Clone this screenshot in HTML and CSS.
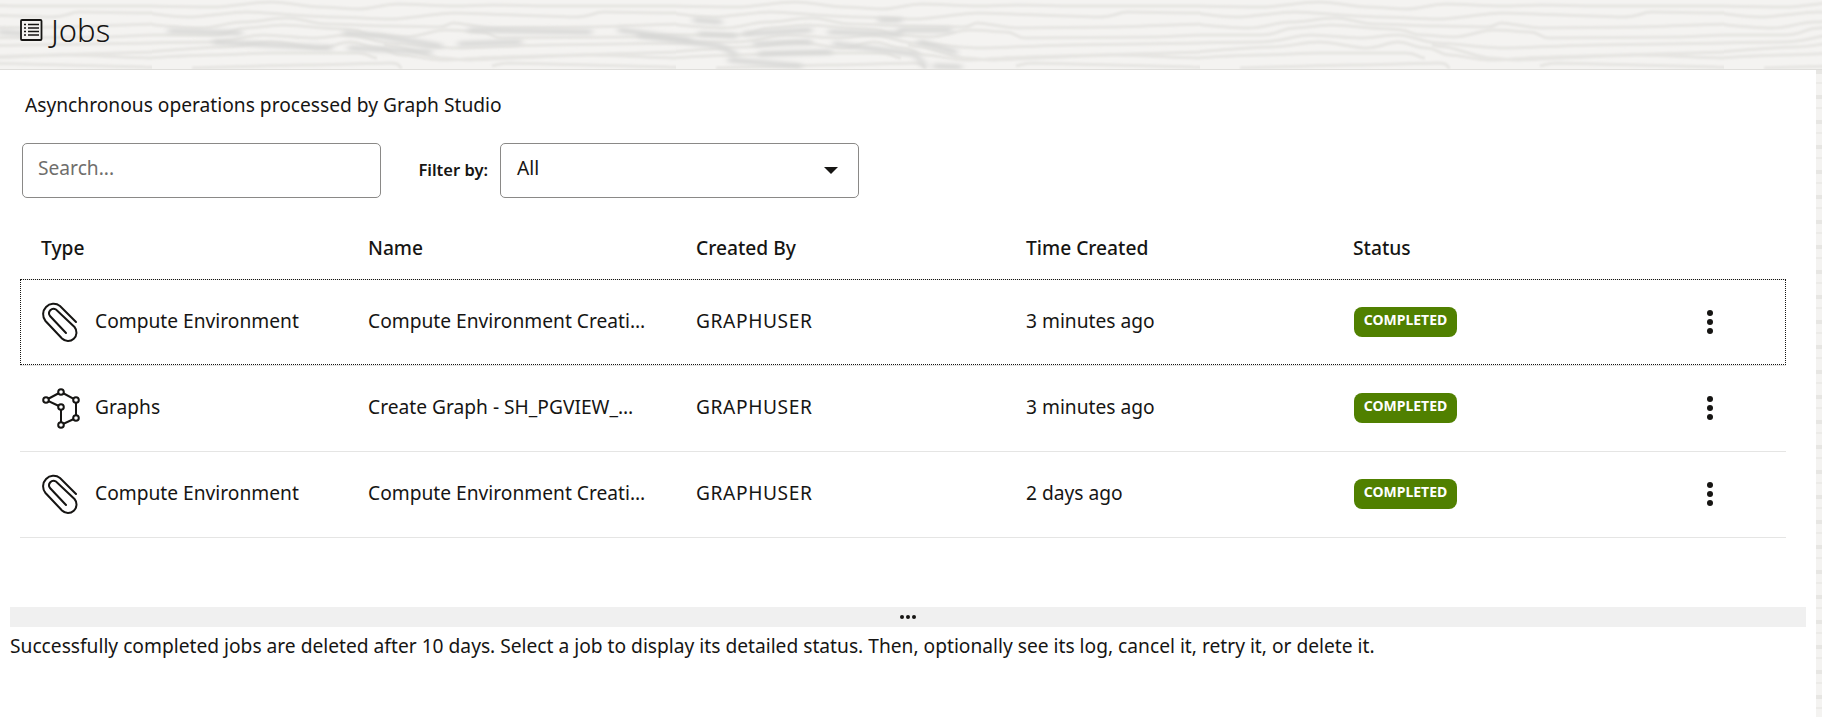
FILE: index.html
```html
<!DOCTYPE html>
<html lang="en">
<head>
    <meta charset="UTF-8">
    <title>Jobs</title>
    <link rel="stylesheet" href="styles.css">
</head>
<body>
    <header class="page-header">
        <svg class="wood" width="1822" height="70" aria-hidden="true">
            <defs>
                <filter id="soft" x="-5%" y="-50%" width="110%" height="200%"><feGaussianBlur stdDeviation="0.8"></feGaussianBlur></filter>
                <filter id="softer" x="-5%" y="-50%" width="110%" height="200%"><feGaussianBlur stdDeviation="3 2"></feGaussianBlur></filter>
                <pattern id="grain" width="524" height="70" patternUnits="userSpaceOnUse" x="152">
                    <g fill="none" stroke="#e6e5e2" stroke-width="3" filter="url(#soft)">
                        <path d="M-5 6 S40 7 60 7 S100 2 119 2 S150 7 167 7 S190 9 206 9 S230 4 246 4 S285 6 302 6 S325 5 341 5 S380 6 397 6 S500 6 529 6"></path>
                        <path d="M-5 13 S20 17 36 17 S80 12 95 12 S160 17 179 17 S220 19 238 19 S285 13 302 13 S400 17 421 17 S440 12 452 12 S510 13 529 13"></path>
                        <path d="M-5 24 S30 28 48 28 S75 22 91 22 S120 18 135 18 S160 24 175 24 S220 26 238 26 S275 27 286 27 S295 23 302 23 S330 28 341 28 S420 27 437 27 S510 24 529 24"></path>
                        <path d="M-5 35 S40 35 60 35 S80 28 95 28 S115 25 131 25 S170 29 190 29 S210 35 222 35 S240 37 254 37 S280 30 294 30 S318 32 329 32 S340 38 349 38 S460 37 476 37 S510 35 529 35"></path>
                        <path d="M-5 43 S40 42 60 42 S95 35 111 35 S145 38 159 38 S185 35 198 35 S225 43 238 43 S285 48 302 48 S380 45 397 45 S510 43 529 43"></path>
                        <path d="M-5 52 S55 47 71 47 S105 42 119 42 S155 48 167 48 S188 42 198 42 S215 48 226 48 S240 55 250 55 S275 60 290 60 S335 57 350 57 S510 52 529 52"></path>
                        <path d="M-5 58 S45 55 60 55 S105 53 119 53 S195 53 206 53 S218 58 225 58"></path>
                        <path d="M232 45 S240 47 246 47 S280 58 290 58 S305 60 317 60 S420 55 437 55 S510 58 529 58"></path>
                        <path d="M40 68 S135 65 151 65 S225 63 238 63 S246 68 250 68"></path>
                        <path d="M340 66 S350 63 357 63 S500 67 516 67 S525 68 529 68"></path>
                    </g>
                </pattern>
            </defs>
            <rect width="1822" height="70" fill="url(#grain)"></rect>
            <g fill="none" stroke="#d7d7d5" stroke-width="5" filter="url(#softer)" stroke-linecap="round">
                <path d="M170 31 L240 33"></path>
                <path d="M215 42 L330 48"></path>
                <path d="M345 33 L380 36 L440 46"></path>
                <path d="M350 48 L430 52"></path>
                <path d="M470 30 L590 32"></path>
                <path d="M460 44 L520 42"></path>
                <path d="M0 32 L30 34"></path>
                <path d="M620 30 L690 40"></path>
                <path d="M640 36 L720 46 L735 54"></path>
                <path d="M695 20 L720 22"></path>
                <path d="M700 34 L735 36"></path>
                <path d="M730 60 L800 66"></path>
                <path d="M745 34 L810 30"></path>
                <path d="M755 44 L810 42"></path>
                <path d="M760 54 L830 52"></path>
                <path d="M830 32 L900 34"></path>
                <path d="M835 44 L915 54 L925 66"></path>
                <path d="M880 20 L900 20"></path>
                <path d="M900 30 L950 30"></path>
                <path d="M920 42 L955 52"></path>
                <path d="M935 66 L960 67"></path>
            </g>
        </svg>
        <svg class="title-icon" width="23" height="22" viewBox="0 0 23 22" aria-hidden="true">
            <rect x="1" y="1" width="20.5" height="20" rx="1" fill="#f4f3f1" stroke="#161513" stroke-width="1.8"></rect>
            <path d="M4 5.5h2M4 9h2M4 12.500h2M4 16h2" stroke="#161513" stroke-width="1.3"></path>
            <path d="M8 5.500h11M8 9h11M8 12.500h11M8 16h11" stroke="#161513" stroke-width="1.3"></path>
        </svg>
        <h1>Jobs</h1>
    </header>

    <div class="page-body">
        <main class="panel">
            <p class="intro">Asynchronous operations processed by Graph Studio</p>

            <div class="toolbar">
                <input class="search" type="text" placeholder="Search...">
                <label class="filter-label">Filter by:</label>
                <div class="select">
                    <span class="select-value">All</span>
                    <span class="caret"></span>
                </div>
            </div>

            <table class="jobs">
                <thead>
                    <tr>
                        <th class="col-type">Type</th>
                        <th class="col-name">Name</th>
                        <th class="col-by">Created By</th>
                        <th class="col-time">Time Created</th>
                        <th class="col-status">Status</th>
                        <th></th>
                    </tr>
                </thead>
                <tbody>
                    <tr class="selected">
                        <td class="icon-col">
                            <div class="type-cell">
                                <svg class="type-icon" width="44" height="46" viewBox="0 0 44 46"><use href="#clip"></use></svg>
                                <span class="type-label">Compute Environment</span>
                            </div>
                        </td>
                        <td class="job-name">Compute Environment Creati…</td>
                        <td class="user">GRAPHUSER</td>
                        <td>3 minutes ago</td>
                        <td class="icon-col"><span class="badge">COMPLETED</span></td>
                        <td class="icon-col more"><span class="dots"><i></i><i></i><i></i></span></td>
                    </tr>
                    <tr>
                        <td class="icon-col">
                            <div class="type-cell">
                                <svg class="type-icon" width="44" height="46" viewBox="0 0 44 46"><use href="#graph"></use></svg>
                                <span class="type-label">Graphs</span>
                            </div>
                        </td>
                        <td class="job-name">Create Graph - SH_PGVIEW_…</td>
                        <td class="user">GRAPHUSER</td>
                        <td>3 minutes ago</td>
                        <td class="icon-col"><span class="badge">COMPLETED</span></td>
                        <td class="icon-col more"><span class="dots"><i></i><i></i><i></i></span></td>
                    </tr>
                    <tr>
                        <td class="icon-col">
                            <div class="type-cell">
                                <svg class="type-icon" width="44" height="46" viewBox="0 0 44 46"><use href="#clip"></use></svg>
                                <span class="type-label">Compute Environment</span>
                            </div>
                        </td>
                        <td class="job-name">Compute Environment Creati…</td>
                        <td class="user">GRAPHUSER</td>
                        <td>2 days ago</td>
                        <td class="icon-col"><span class="badge">COMPLETED</span></td>
                        <td class="icon-col more"><span class="dots"><i></i><i></i><i></i></span></td>
                    </tr>
                </tbody>
            </table>

            <div class="splitter"><span class="splitter-dots"><i></i><i></i><i></i></span></div>
            <p class="note">Successfully completed jobs are deleted after 10 days. Select a job to display its detailed status. Then, optionally see its log, cancel it, retry it, or delete it.</p>
        </main>
        <div class="edge"></div>
    </div>

    <svg class="icon-defs" width="0" height="0" aria-hidden="true">
        <defs>
            <g id="clip" fill="none" stroke="#161513" stroke-width="2" stroke-linecap="round">
                <path d="M36 23 L20 7 A10.5 10.5 0 0 0 5.5 22 L22 39.500 A8.500 8.500 0 0 0 34.500 28 L16 10.500 A4.500 4.500 0 0 0 10 17 L26 34"></path>
            </g>
            <g id="graph" fill="#fff" stroke="#161513" stroke-width="2">
                <path d="M6 15 L21 7 L36 15 L36 33 L21 40 L21 22 Z" fill="none"></path>
                <circle cx="6" cy="15" r="2.800"></circle>
                <circle cx="21" cy="7" r="2.800"></circle>
                <circle cx="36" cy="15" r="2.800"></circle>
                <circle cx="36" cy="33" r="2.800"></circle>
                <circle cx="21" cy="40" r="2.800"></circle>
                <circle cx="21" cy="22" r="2.800"></circle>
            </g>
        </defs>
    </svg>
</body>
</html>
```

FILE: styles.css
```css
* {
    box-sizing: border-box;
}
html, body {
    height: 100%;
}
body {
    margin: 0;
    overflow: hidden;
    font-family: "Noto Sans", Arial, sans-serif;
    font-size: 19.2px;
    color: #161513;
    background-color: #fff;
}
.page-header {
    position: relative;
    display: flex;
    align-items: center;
    height: 70px;
    padding: 0 0 9px 20px;
    background-color: #f4f3f1;
    border-bottom: 1px solid #dfdedb;
    overflow: hidden;
}
.wood {
    position: absolute;
    left: 0;
    top: 0;
}
.title-icon {
    position: relative;
    margin-right: 8px;
}
h1 {
    position: relative;
    margin: 0;
    font-size: 31px;
    font-weight: 350;
    line-height: 38px;
}
.page-body {
    display: flex;
    height: 647px;
}
.panel {
    width: 1816px;
    background-color: #fff;
}
.edge {
    width: 6px;
    background-color: #f4f3f1;
    background-image: repeating-linear-gradient(180deg, #e7e6e3 0, #e7e6e3 4px, #f4f3f1 4px, #f4f3f1 12px, #ecebe8 12px, #ecebe8 14px, #f4f3f1 14px, #f4f3f1 25px);
}
.intro {
    margin: 23px 0 26px 25px;
    line-height: 24px;
}
.toolbar {
    display: flex;
    align-items: center;
    margin-left: 22px;
}
.search {
    width: 359px;
    height: 55px;
    padding: 0 15px 6px;
    font: inherit;
    color: #161513;
    background: #fff;
    border: 1px solid #8a8987;
    border-radius: 5px;
}
.search::placeholder {
    color: #6f6e6c;
    opacity: 1;
}
.filter-label {
    width: 119px;
    padding: 0 12px 3px 0;
    font-size: 16.5px;
    font-weight: 600;
    text-align: right;
}
.select {
    display: flex;
    align-items: center;
    justify-content: space-between;
    width: 359px;
    height: 55px;
    padding: 0 20px 0 16px;
    border: 1px solid #8a8987;
    border-radius: 5px;
}
.select-value {
    padding-bottom: 6px;
}
.caret {
    width: 0;
    height: 0;
    border-left: 7px solid transparent;
    border-right: 7px solid transparent;
    border-top: 7px solid #161513;
}
.jobs {
    width: 1766px;
    margin: 20px 0 0 20px;
    table-layout: fixed;
    border-collapse: collapse;
}
.jobs th {
    height: 61px;
    padding: 0 21px 2px;
    font-weight: 500;
    text-align: left;
    border-bottom: 1px solid #e5e5e4;
}
.jobs td {
    height: 86px;
    padding: 0 21px 3px;
    border-bottom: 1px solid #e5e5e4;
}
.jobs td.icon-col {
    padding-bottom: 0;
}
.jobs tr.selected {
    outline: 1px dotted #161513;
    outline-offset: -1px;
}
.col-type {
    width: 327px;
}
.col-name {
    width: 328px;
}
.col-by {
    width: 330px;
}
.col-time {
    width: 327px;
}
.col-status {
    width: 328px;
}
.type-cell {
    display: flex;
    align-items: center;
}
.type-icon {
    flex: none;
    margin: 0 11px 0 -1px;
}
.type-label {
    padding-bottom: 3px;
}
.job-name {
    white-space: nowrap;
}
.user {
    letter-spacing: 0.6px;
}
.badge {
    display: block;
    width: 103px;
    height: 30px;
    margin-left: 1px;
    font-size: 14px;
    font-weight: 700;
    line-height: 26px;
    text-align: center;
    color: #fff;
    background-color: #508000;
    border-radius: 8px;
}
.jobs td.more {
    padding-left: 47px;
}
.dots {
    display: flex;
    flex-direction: column;
    gap: 3px;
    width: 6px;
}
.dots i {
    width: 6px;
    height: 6px;
    background-color: #161513;
    border-radius: 50%;
}
.splitter {
    display: flex;
    align-items: center;
    justify-content: center;
    width: 1796px;
    height: 20px;
    margin: 69px 0 0 10px;
    background-color: #f0f0f0;
}
.splitter-dots {
    display: flex;
    gap: 2px;
}
.splitter-dots i {
    width: 4px;
    height: 4px;
    background-color: #161513;
    border-radius: 50%;
}
.note {
    margin: 0 0 0 10px;
    line-height: 38px;
}
.icon-defs {
    position: absolute;
}
```
